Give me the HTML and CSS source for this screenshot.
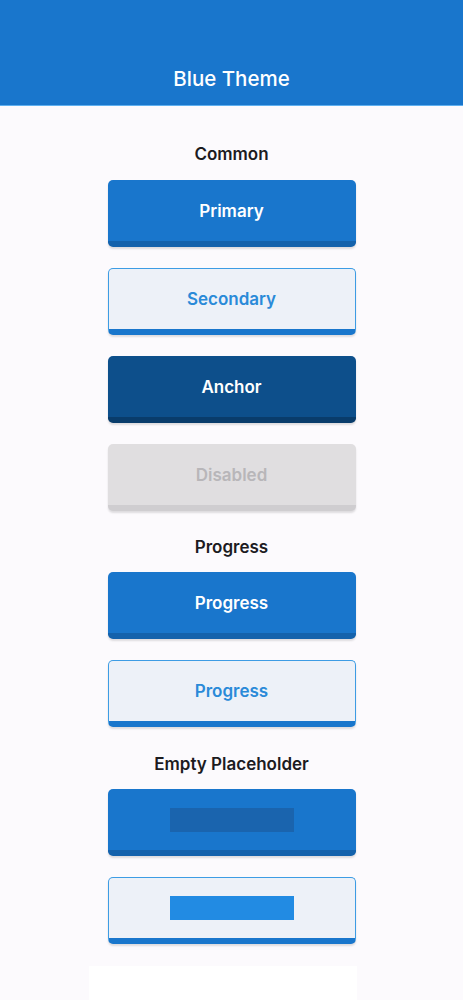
FILE: index.html
```html
<!doctype html>
<html lang="en">
<head>
	<meta http-equiv="Content-Type" content="text/html; charset=utf-8">
	<title>Blue Theme</title>
	<link rel="stylesheet" href="styles.css">
</head>
<body>
	<div class="header">
		<div class="title">Blue Theme</div>
	</div>

	<div class="content">
		<div class="section first">
			<div class="label">Common</div>
			<div class="buttons">
				<div class="btn primary">Primary</div>
				<div class="btn secondary">Secondary</div>
				<div class="btn anchor">Anchor</div>
				<div class="btn disabled">Disabled</div>
			</div>
		</div>

		<div class="section">
			<div class="label">Progress</div>
			<div class="buttons">
				<div class="btn primary">Progress</div>
				<div class="btn secondary">Progress</div>
			</div>
		</div>

		<div class="section last">
			<div class="label">Empty Placeholder</div>
			<div class="buttons">
				<div class="btn primary"><span class="placeholder"></span></div>
				<div class="btn secondary"><span class="placeholder"></span></div>
			</div>
		</div>

		<div class="footer"></div>
	</div>
</body>
</html>
```

FILE: styles.css
```css
body {
  margin: 0;
  background: #fcfafd;
  font-family: Inter, Roboto, "Noto Sans", sans-serif;
}

/* Top bar */
.header {
  height: 105px;
  background: #1976cc;
  border-bottom: 1px solid #5fb0f0;
  display: flex;
  align-items: flex-end;
  justify-content: center;
}

.title {
  color: #fff;
  font-size: 20.5px;
  font-weight: 500;
  line-height: 24px;
  margin-bottom: 14px;
}

.content {
  display: flex;
  flex-direction: column;
  align-items: center;
}

.section {
  display: flex;
  flex-direction: column;
  align-items: center;
  margin-top: 26px;
}

.section.first {
  margin-top: 38px;
}

.section.last {
  margin-top: 27px;
}

.label {
  font-size: 17px;
  font-weight: 600;
  line-height: 20px;
  color: #1c1b1f;
  margin-bottom: 16px;
}

.section + .section .label {
  margin-bottom: 15px;
}

.buttons {
  display: flex;
  flex-direction: column;
  gap: 21px;
}

/* Buttons */
.btn {
  box-sizing: border-box;
  width: 248px;
  height: 67px;
  border-radius: 5px;
  border-bottom: 6px solid;
  display: flex;
  align-items: center;
  justify-content: center;
  font-size: 17px;
  font-weight: 600;
  box-shadow: 0 2px 2px rgba(0, 0, 0, 0.12);
}

.primary {
  background: #1976cc;
  border-bottom-color: #1462ac;
  color: #fff;
}

.secondary {
  background: #edf1f8;
  border: 1.5px solid #3d9ce4;
  border-bottom: 6px solid #1976cc;
  color: #2a8ad8;
}

.anchor {
  background: #0d4f8b;
  border-bottom-color: #093c6b;
  color: #fff;
}

.disabled {
  background: #e0dee0;
  border-bottom-color: #cfcdd0;
  color: #b8b6b9;
}

.placeholder {
  display: block;
  width: 124px;
  height: 24px;
}

.primary .placeholder {
  background: #1a64ae;
}

.secondary .placeholder {
  background: #228be3;
}

.footer {
  align-self: flex-start;
  width: 268px;
  height: 40px;
  margin-top: 22px;
  margin-left: 89px;
  background: #fff;
}
```
